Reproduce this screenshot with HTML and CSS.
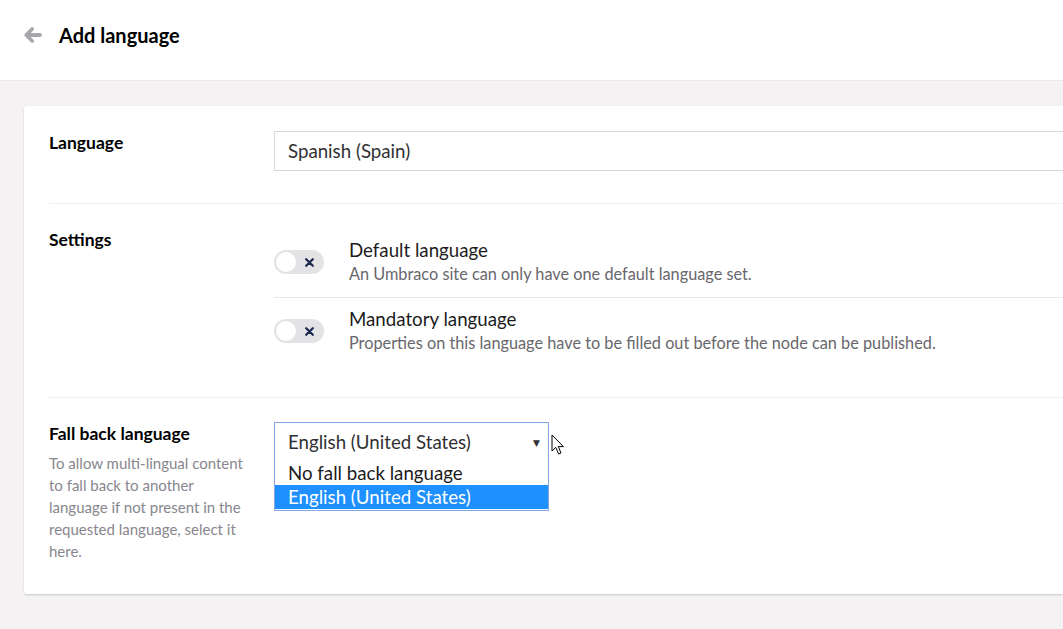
FILE: index.html
```html
<!DOCTYPE html>
<html lang="en">
<head>
<meta charset="utf-8">
<title>Add language</title>
<link rel="stylesheet" href="styles.css">
</head>
<body>
<header class="topbar">
  <svg class="back" width="18" height="16" viewBox="0 0 18 16" aria-hidden="true">
    <path d="M8.2 2 L2.2 8 L8.2 14" fill="none" stroke="#a7a6ab" stroke-width="3.6" stroke-linecap="round" stroke-linejoin="round"/>
    <path d="M3 8 H16" fill="none" stroke="#a7a6ab" stroke-width="3.8" stroke-linecap="round"/>
  </svg>
  <h1 class="title">Add language</h1>
</header>
<main class="main">
  <section class="card">
    <div class="row row-first">
      <div class="label-col"><div class="label">Language</div></div>
      <div class="control-col">
        <div class="text-input">Spanish (Spain)</div>
      </div>
    </div>
    <div class="row row-settings">
      <div class="label-col"><div class="label">Settings</div></div>
      <div class="control-col">
        <div class="toggle-item">
          <span class="toggle"><span class="knob"></span><svg class="x" width="9" height="9" viewBox="0 0 9 9" aria-hidden="true"><path d="M1.2 1.2 L7.8 7.8 M7.8 1.2 L1.2 7.8" stroke="#1b264f" stroke-width="2.2" stroke-linecap="round"/></svg></span>
          <div class="toggle-text">
            <div class="toggle-title">Default language</div>
            <div class="toggle-desc">An Umbraco site can only have one default language set.</div>
          </div>
        </div>
        <div class="toggle-item toggle-item-last">
          <span class="toggle"><span class="knob"></span><svg class="x" width="9" height="9" viewBox="0 0 9 9" aria-hidden="true"><path d="M1.2 1.2 L7.8 7.8 M7.8 1.2 L1.2 7.8" stroke="#1b264f" stroke-width="2.2" stroke-linecap="round"/></svg></span>
          <div class="toggle-text">
            <div class="toggle-title">Mandatory language</div>
            <div class="toggle-desc">Properties on this language have to be filled out before the node can be published.</div>
          </div>
        </div>
      </div>
    </div>
    <div class="row row-last">
      <div class="label-col">
        <div class="label">Fall back language</div>
        <div class="label-desc">To allow multi-lingual content to fall back to another language if not present in the requested language, select it here.</div>
      </div>
      <div class="control-col">
        <div class="select-wrap">
          <div class="select">
            <span>English (United States)</span>
            <span class="caret">▼</span>
          </div>
          <ul class="options">
            <li class="option">No fall back language</li>
            <li class="option selected">English (United States)</li>
          </ul>
          <svg class="cursor" width="14" height="22" viewBox="0 0 14 22" aria-hidden="true">
            <path d="M1 1 V17 L4.8 13.4 L7.6 20 L10 19 L7.3 12.6 L12.4 12.6 Z" fill="#fff" stroke="#000" stroke-width="1" stroke-linejoin="miter"/>
          </svg>
        </div>
      </div>
    </div>
  </section>
</main>
</body>
</html>
```

FILE: styles.css
```css
* { box-sizing: border-box; }

html, body {
  margin: 0;
  padding: 0;
  height: 100%;
}

body {
  font-family: Lato, "Open Sans", "Liberation Sans", sans-serif;
  color: #1b264f;
  background: #f4f2f2;
  overflow: hidden;
  display: flex;
  flex-direction: column;
}

.topbar {
  height: 81px;
  background: #fff;
  border-bottom: 1px solid #e9e9eb;
  display: flex;
  align-items: center;
  padding: 0 0 11px 24px;
  gap: 17px;
  flex: none;
}

.back { display: block; margin-top: 1px; }

.title {
  margin: 0;
  font-size: 20px;
  font-weight: 700;
  color: #000;
  line-height: 24px;
}

.main {
  flex: 1;
  padding: 25px 0 0 24px;
}

.card {
  background: #fff;
  border-radius: 3px 0 0 3px;
  box-shadow: 0 1px 2px rgba(0, 0, 0, 0.18);
  padding: 25px 0 32px 25px;
}

.row {
  display: flex;
  border-top: 1px solid #f0eff1;
  padding: 24px 0 0 0;
}

.row-first {
  border-top: none;
  padding: 0 0 32px 0;
}

.row-settings { padding-bottom: 31px; }

.label-col {
  width: 225px;
  flex: none;
  padding: 2px 20px 0 0;
}

.label {
  font-size: 17.5px;
  font-weight: 700;
  line-height: 20px;
  color: #000;
}

.label-desc {
  margin-top: 8px;
  font-size: 15px;
  line-height: 22px;
  color: #88868e;
}

.control-col {
  flex: 1;
  min-width: 0;
}

.text-input {
  height: 40px;
  border: 1px solid #d8d7d9;
  border-right: none;
  padding: 0 13px;
  font-size: 18.7px;
  line-height: 38px;
  color: #303033;
}

.toggle-item {
  display: flex;
  align-items: center;
  gap: 25px;
  padding: 11px 0 12px;
  border-bottom: 1px solid #e9e9eb;
}

.toggle-item-last {
  border-bottom: none;
  padding: 10px 0 12px;
}

.toggle {
  flex: none;
  width: 50px;
  height: 24px;
  border-radius: 12px;
  background: #e3e2e5;
  position: relative;
  display: flex;
  align-items: center;
}

.knob {
  position: absolute;
  left: 2px;
  top: 2px;
  width: 20px;
  height: 20px;
  border-radius: 50%;
  background: #fff;
}

.x {
  display: block;
  margin-left: 31px;
}

.toggle-title {
  font-size: 18.7px;
  line-height: 22px;
  color: #1b1b1b;
}

.toggle-desc {
  margin-top: 2px;
  font-size: 16.3px;
  line-height: 22px;
  color: #68676b;
  white-space: nowrap;
}

.select-wrap {
  position: relative;
  width: 275px;
}

.select {
  height: 40px;
  border: 1px solid #86a7e4;
  display: flex;
  align-items: center;
  justify-content: space-between;
  padding: 0 8px 0 13px;
  font-size: 18.7px;
  color: #303033;
}

.caret {
  font-size: 9px;
  color: #303033;
  font-family: "DejaVu Sans", sans-serif;
  margin-top: 1px;
}

.options {
  position: absolute;
  left: 0;
  top: 39px;
  width: 275px;
  margin: 0;
  padding: 0 0 1px;
  list-style: none;
  background: #fff;
  border: 1px solid #86a7e4;
  border-top: none;
}

.option {
  height: 24px;
  line-height: 24px;
  padding: 0 13px;
  font-size: 18.7px;
  color: #1b1b1b;
}

.option.selected {
  background: #1e90ff;
  color: #fff;
}

.cursor {
  position: absolute;
  left: 277px;
  top: 12px;
}
```
